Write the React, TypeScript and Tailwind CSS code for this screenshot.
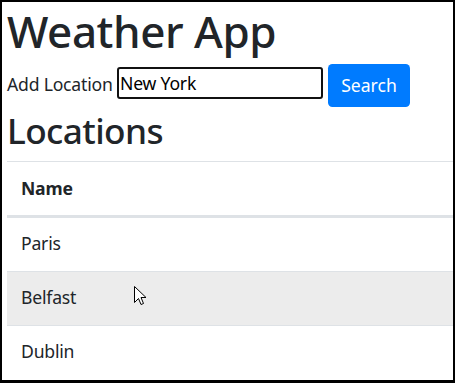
export default function App() {
  const rows = ["Paris", "Belfast", "Dublin"];
  return (
    <div className="relative h-[383px] w-[455px] overflow-hidden border-x-2 border-t-2 border-b-[3px] border-black bg-white font-['Noto_Sans',sans-serif] text-[#212529]">
      <div className="pl-[5px]">
        <h1 className="h-[62px] pt-[3px] text-[44px] font-medium leading-[52.8px] tracking-[-0.45px]">Weather App</h1>
        <div className="flex h-[43px] items-start">
          <label className="mt-[7px] w-[110px] text-[17.6px] leading-[26.4px] tracking-[-0.2px]">Add Location</label>
          <input
            className="mt-[3px] h-[32px] w-[206px] rounded-[3px] border-2 border-[#111] bg-white pl-[1px] text-[17.6px] leading-[26.4px] tracking-[-0.2px] text-black outline-none"
            defaultValue="New York"
            readOnly
          />
          <button className="ml-[5px] h-[43px] w-[82px] rounded-[4.4px] bg-[#007bff] text-[17.6px] leading-[26.4px] text-white">
            Search
          </button>
        </div>
        <h2 className="h-[54px] pt-[2px] text-[35.2px] font-medium leading-[42.24px] tracking-[-0.6px]">Locations</h2>
        <div className="w-[446px]">
          <div className="h-[56px] border-t border-b-2 border-[#dee2e6] px-[14px] py-[13px] text-[17.6px] font-bold leading-[26.4px] tracking-[-0.2px]">
            Name
          </div>
          {rows.map((r, i) => (
            <div
              key={r}
              className={
                i === 1
                  ? "h-[54px] border-t border-[#dee2e6] bg-[#ececec] px-[14px] py-[12px] text-[17.6px] leading-[26.4px] tracking-[-0.2px]"
                  : "h-[54px] border-t border-[#dee2e6] px-[14px] py-[12px] text-[17.6px] leading-[26.4px] tracking-[-0.2px]"
              }
            >
              {r}
            </div>
          ))}
        </div>
      </div>
      <svg className="absolute left-[132px] top-[284px]" width="13" height="20" viewBox="0 0 13 20">
        <path d="M0.5 0.5 L0.5 16.5 L4.5 12.5 L7 18.5 L9.5 17.5 L7 11.5 L12 11.5 Z" fill="#fff" stroke="#000" strokeWidth="1" strokeLinejoin="miter" />
      </svg>
    </div>
  );
}
